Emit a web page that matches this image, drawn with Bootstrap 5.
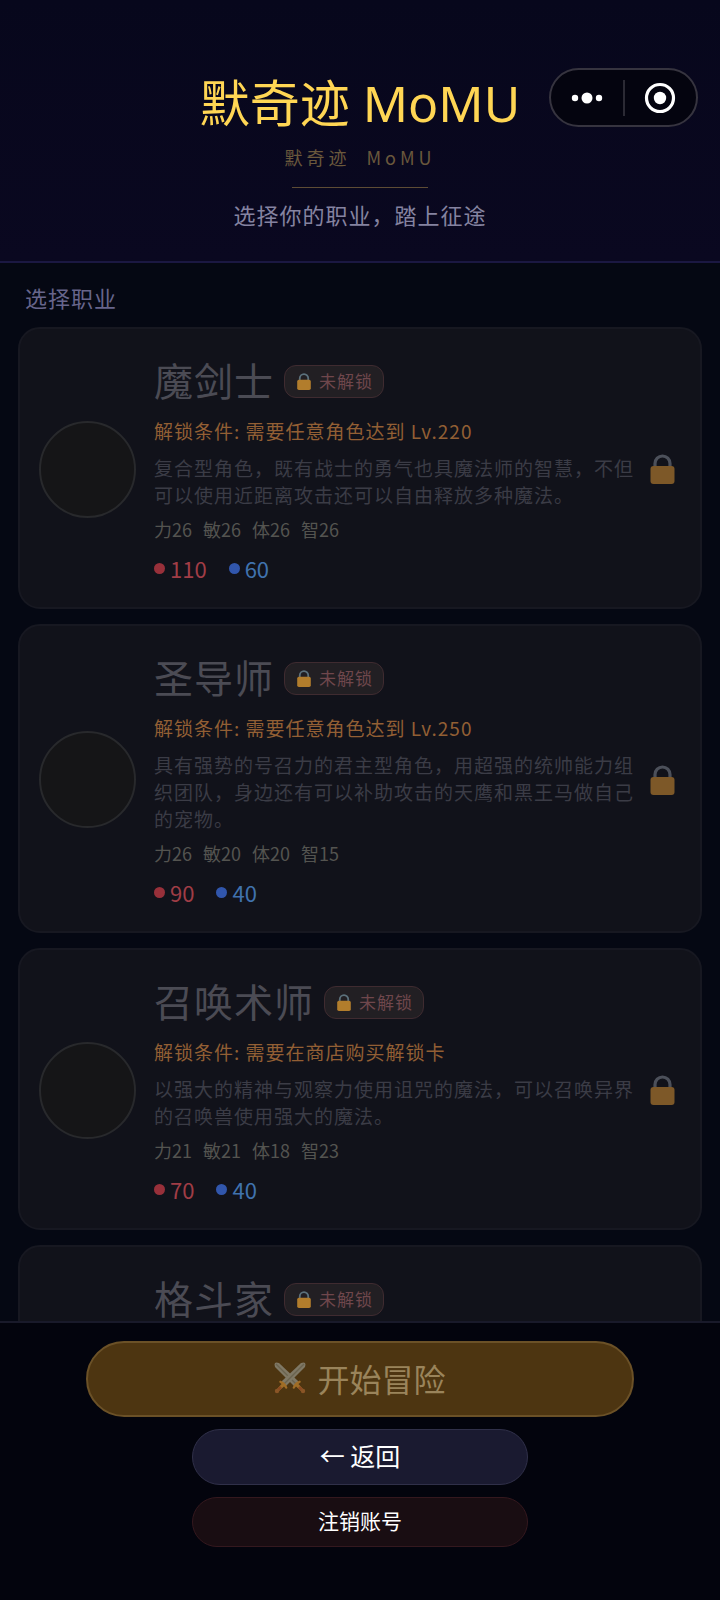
<!DOCTYPE html>
<html lang="zh-CN">
<head>
<meta charset="utf-8">
<meta name="viewport" content="width=device-width, initial-scale=1">
<title>默奇迹 MoMU</title>
<link href="https://cdn.jsdelivr.net/npm/bootstrap@5.3.0/dist/css/bootstrap.min.css" rel="stylesheet">
<style>
  body { background: #050813; font-family: "Noto Sans CJK SC", sans-serif; }
  button { font-family: inherit; }
  .hero { background: linear-gradient(#07071c, #0a0820); border-bottom: 2px solid #1b1842; padding: 68px 20px 31px; }
  .game-title { color: #ffd654; font-family: "Noto Sans", "Noto Sans CJK SC", sans-serif; font-size: 50px; line-height: 70px; font-weight: 400; }
  .game-sub { color: #6a583c; font-size: 18px; line-height: 24px; letter-spacing: 4px; margin-top: 7px; }
  .rule { width: 136px; height: 1px; background: #5d4c35; margin: 18px auto 10px; }
  .tagline { color: #8583a0; font-size: 22px; line-height: 32px; letter-spacing: 1px; }
  .capsule { top: 68px; right: 22px; width: 149px; height: 59px; background: #04040f; border: 2px solid #36343f; }
  .capsule button { padding: 0; border: 0; background: none; line-height: 0; }
  .capsule .bar { width: 2px; height: 36px; background: #2b2a34; }
  .roster { padding: 18px 18px 0; scrollbar-width: none; min-height: 0; }
  .section-name { color: #67658b; font-size: 22px; line-height: 32px; letter-spacing: 1px; padding-left: 7px; margin: 0 0 14px; }
  .hero-card { display: flex; align-items: center; flex-shrink: 0; min-height: 282px; padding: 27px 25px 25px 19px; margin-bottom: 15px; background: #11121a; border: 2px solid #171821; border-radius: 22px; }
  .avatar { width: 97px; height: 97px; flex: none; background: #151517; border: 2px solid #28292c; border-radius: 50%; margin-right: 18px; }
  .info { flex: 1; min-width: 0; align-self: flex-start; }
  .hero-name { color: #4b4b54; font-size: 39px; line-height: 46px; padding-bottom: 4px; letter-spacing: 1px; margin: 0; font-weight: 400; }
  .lock-tag { display: flex; align-items: center; gap: 8px; height: 33px; padding: 0 10px 0 12px; margin-left: 10px; color: #6f474c; background: #221f23; border: 1px solid #3f2b30; border-radius: 12px; font-size: 17px; letter-spacing: 1px; }
  .cond { color: #925f34; font-size: 19px; line-height: 26px; letter-spacing: 1px; margin: 12px 0 10px; }
  .desc { color: #3b3c46; font-size: 19px; line-height: 27px; letter-spacing: 1px; margin: 0; }
  .stats { display: flex; gap: 11px; color: #545450; font-size: 18px; line-height: 26px; margin: 8px 0 12px; }
  .vitals { display: flex; gap: 22px; font-size: 22px; line-height: 28px; }
  .vitals span { display: flex; align-items: center; gap: 5px; }
  .vitals i { width: 11px; height: 11px; border-radius: 50%; }
  .hp { color: #a03d46; } .hp i { background: #98303a; }
  .mp { color: #4072ae; } .mp i { background: #3156ac; }
  .big-lock { flex: none; margin-left: 14px; }
  .actions { background: #03040d; border-top: 2px solid #191a2a; padding: 18px 18px 53px; gap: 12px; }
  .actions .btn { padding: 0 0 2px; color: #fff; border-radius: 40px; font-weight: 400; --bs-btn-disabled-opacity: 1; }
  .actions .btn-go { width: 80%; height: 76px; font-size: 32px; color: #9a845b; background: #4d3511; border: 2px solid #6b5127; gap: 11px; }
  .actions .btn-back { width: 49%; height: 56px; font-size: 25px; background: #1a1a30; border: 1px solid #303049; }
  .actions .btn-out { width: 49%; height: 50px; font-size: 21px; background: #190d12; border: 1px solid #34181e; }
</style>
</head>
<body class="d-flex flex-column vh-100">
<svg class="d-none" aria-hidden="true">
  <symbol id="lock" viewBox="0 0 24 30">
    <path d="M4.500 14V9.500a7.500 7.500 0 0 1 15 0V14" fill="none" stroke="var(--shackle)" stroke-width="3.200"/>
    <rect y="12" width="24" height="18" rx="3" fill="var(--lockbody)"/>
  </symbol>
</svg>
<header class="hero text-center position-relative">
  <h1 class="game-title mb-0">默奇迹 MoMU</h1>
  <div class="game-sub">默奇迹&nbsp; MoMU</div>
  <div class="rule"></div>
  <div class="tagline">选择你的职业，踏上征途</div>
  <div class="capsule position-absolute rounded-pill d-flex align-items-center">
    <button type="button" class="flex-fill" aria-label="更多"><svg width="32" height="12"><g fill="#fff"><circle cx="4" cy="6" r="3.200"/><circle cx="16" cy="6" r="5.500"/><circle cx="28" cy="6" r="3.200"/></g></svg></button>
    <span class="bar"></span>
    <button type="button" class="flex-fill" aria-label="关闭"><svg width="32" height="32"><circle cx="16" cy="16" r="13.500" fill="none" stroke="#fff" stroke-width="3.200"/><circle cx="16" cy="16" r="6.200" fill="#fff"/></svg></button>
  </div>
</header>

<main class="roster flex-fill overflow-auto d-flex flex-column">
  <h2 class="section-name fw-normal">选择职业</h2>

  <article class="hero-card">
    <div class="avatar"></div>
    <div class="info">
      <div class="d-flex align-items-center"><h3 class="hero-name">魔剑士</h3><span class="lock-tag"><svg width="14" height="17" style="--shackle:#5c717c;--lockbody:#b27d2c"><use href="#lock"/></svg>未解锁</span></div>
      <p class="cond">解锁条件: 需要任意角色达到 Lv.220</p>
      <p class="desc">复合型角色，既有战士的勇气也具魔法师的智慧，不但可以使用近距离攻击还可以自由释放多种魔法。</p>
      <div class="stats"><span>力26</span><span>敏26</span><span>体26</span><span>智26</span></div>
      <div class="vitals"><span class="hp"><i></i>110</span><span class="mp"><i></i>60</span></div>
    </div>
    <svg class="big-lock" width="25" height="30" style="--shackle:#4c505a;--lockbody:#7d5828"><use href="#lock"/></svg>
  </article>

  <article class="hero-card">
    <div class="avatar"></div>
    <div class="info">
      <div class="d-flex align-items-center"><h3 class="hero-name">圣导师</h3><span class="lock-tag"><svg width="14" height="17" style="--shackle:#5c717c;--lockbody:#b27d2c"><use href="#lock"/></svg>未解锁</span></div>
      <p class="cond">解锁条件: 需要任意角色达到 Lv.250</p>
      <p class="desc">具有强势的号召力的君主型角色，用超强的统帅能力组织团队，身边还有可以补助攻击的天鹰和黑王马做自己的宠物。</p>
      <div class="stats"><span>力26</span><span>敏20</span><span>体20</span><span>智15</span></div>
      <div class="vitals"><span class="hp"><i></i>90</span><span class="mp"><i></i>40</span></div>
    </div>
    <svg class="big-lock" width="25" height="30" style="--shackle:#4c505a;--lockbody:#7d5828"><use href="#lock"/></svg>
  </article>

  <article class="hero-card">
    <div class="avatar"></div>
    <div class="info">
      <div class="d-flex align-items-center"><h3 class="hero-name">召唤术师</h3><span class="lock-tag"><svg width="14" height="17" style="--shackle:#5c717c;--lockbody:#b27d2c"><use href="#lock"/></svg>未解锁</span></div>
      <p class="cond">解锁条件: 需要在商店购买解锁卡</p>
      <p class="desc">以强大的精神与观察力使用诅咒的魔法，可以召唤异界的召唤兽使用强大的魔法。</p>
      <div class="stats"><span>力21</span><span>敏21</span><span>体18</span><span>智23</span></div>
      <div class="vitals"><span class="hp"><i></i>70</span><span class="mp"><i></i>40</span></div>
    </div>
    <svg class="big-lock" width="25" height="30" style="--shackle:#4c505a;--lockbody:#7d5828"><use href="#lock"/></svg>
  </article>

  <article class="hero-card">
    <div class="avatar"></div>
    <div class="info">
      <div class="d-flex align-items-center"><h3 class="hero-name">格斗家</h3><span class="lock-tag"><svg width="14" height="17" style="--shackle:#5c717c;--lockbody:#b27d2c"><use href="#lock"/></svg>未解锁</span></div>
    </div>
  </article>
</main>

<footer class="actions d-flex flex-column align-items-center">
  <button type="button" class="btn btn-go d-flex align-items-center justify-content-center" disabled>
    <svg width="32" height="32" viewBox="0 0 32 32" aria-hidden="true">
      <g id="sword">
        <path d="M1 1Q2 0 5 1L24.500 19.500 20 24 1 5Q0 2 1 1Z" fill="#7f7865"/>
        <path d="M2 2 22 22" stroke="#6a634f" stroke-width="1.200"/>
        <path d="M18.500 26 20 22.500 22.500 20 26 18.500 27 20 24.500 22 29 27 27 29 22 24.500 20 27Z" fill="#a06d26"/>
        <path d="M25 25 28 28" stroke="#8a4a22" stroke-width="3"/>
        <circle cx="29" cy="29" r="2.200" fill="#8a5526"/>
      </g>
      <use href="#sword" transform="matrix(-1 0 0 1 32 0)"/>
    </svg>
    <span>开始冒险</span>
  </button>
  <button type="button" class="btn btn-back">← 返回</button>
  <button type="button" class="btn btn-out">注销账号</button>
</footer>
<script src="https://cdn.jsdelivr.net/npm/bootstrap@5.3.0/dist/js/bootstrap.bundle.min.js"></script>
</body>
</html>
